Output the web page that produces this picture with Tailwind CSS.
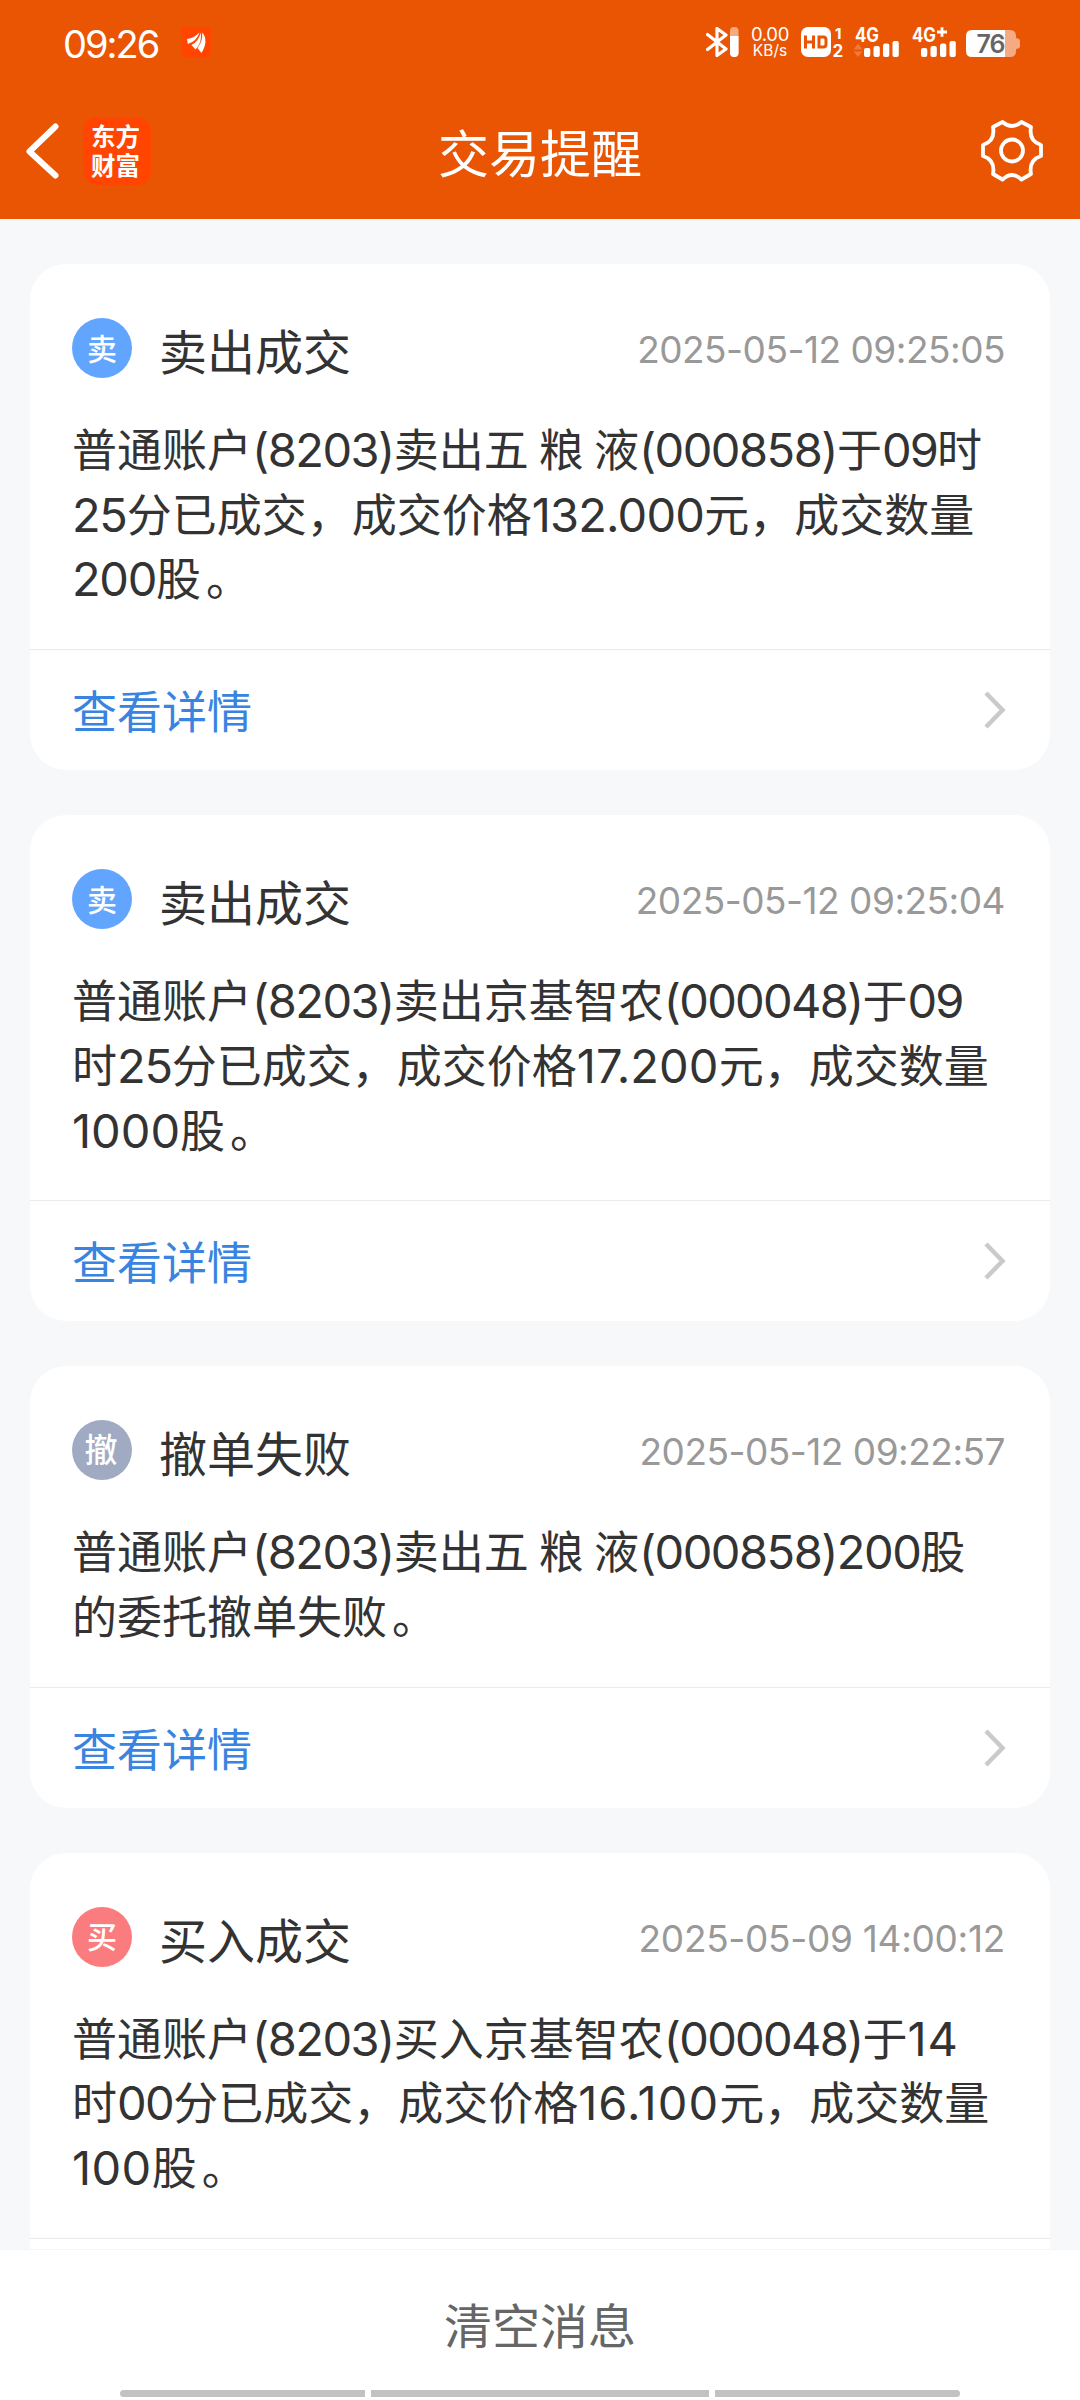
<!DOCTYPE html>
<html lang="zh-CN">
<head>
<meta charset="utf-8">
<title>交易提醒</title>
<script src="https://cdn.jsdelivr.net/npm/@tailwindcss/browser@4"></script>
</head>
<body class="bg-[#f7f8fa]">
<div class="flex h-[2400px] w-[1080px] flex-col overflow-hidden font-['Noto_Sans_CJK_SC',sans-serif] text-[#333333]">

  <header class="flex h-[219px] shrink-0 flex-col bg-[#ea5504] text-white">
    <!-- status bar -->
    <div class="flex h-[84px] items-center pl-[63px] pr-[60px]">
      <span class="w-[118px] pt-1 font-['Inter',sans-serif] text-[38px] leading-none tracking-[-2px]">09:26</span>
      <svg class="h-[30px] w-[30px]" viewBox="0 0 30 30">
        <rect width="30" height="30" rx="3" fill="#ff4500"/>
        <path d="M6 12Q13 11 18.500 5.500Q16 14 6.800 17Z M10.500 18Q18 14 19.700 5.500Q21.500 15 14.500 22.500Z M16.500 21Q22 14 21.200 5.500Q28 13.500 20.500 26Z" fill="#fff"/>
      </svg>
      <svg class="ml-auto h-[30px] w-[34px]" viewBox="0 0 34 30" fill="none">
        <path d="M1.500 7.500L20 22L11 28.500V1.500L20 8L1.500 22.500" stroke="#fff" stroke-width="3.200" stroke-linejoin="round" stroke-linecap="round"/>
        <rect x="24" width="8.500" height="30" rx="4" fill="#f5aa84"/>
        <path d="M24 9h8.500v17a4 4 0 0 1-8.500 0z" fill="#fff"/>
      </svg>
      <div class="ml-[10px] flex w-[40px] flex-col items-center font-['Inter',sans-serif] leading-none">
        <span class="text-[18.5px] leading-[17px] tracking-[-0.3px]">0.00</span>
        <span class="text-[15.5px] leading-[15px]">KB/s</span>
      </div>
      <svg class="ml-[11px] h-[30px] w-[43px] overflow-visible font-['Inter',sans-serif]" viewBox="0 0 43 30">
        <rect width="30" height="30" rx="7" fill="#fff"/>
        <path d="M4.500 8.500V21.500M12.500 8.500V21.500M4.500 15H12.500M18 10H22.500Q25 10 25 13V17Q25 20 22.500 20H18Z" stroke="#ea5504" stroke-width="3" fill="none"/>
        <text x="34" y="11.500" font-size="15" font-weight="700" fill="#fff">1</text>
        <text x="31.500" y="29.500" font-size="17" font-weight="700" fill="#fff">2</text>
      </svg>
      <svg class="ml-[9px] h-[32px] w-[48px] overflow-visible font-['Inter',sans-serif]" viewBox="0 0 48 32">
        <text x="2" y="16" font-size="19.500" font-weight="700" fill="#fff" textLength="24" lengthAdjust="spacingAndGlyphs">4G</text>
        <path d="M0.500 23.500L5 17.500L9.500 23.500ZM0.500 25.500L5 31L9.500 25.500Z" fill="#f2793a"/>
        <g fill="#fff"><rect x="11" y="22" width="6.300" height="9" rx="2"/><rect x="20.500" y="20" width="6.300" height="11" rx="2"/><rect x="30" y="17.500" width="6.300" height="13.500" rx="2"/><rect x="39.500" y="15" width="6.300" height="16" rx="2"/></g>
      </svg>
      <svg class="ml-[10px] h-[32px] w-[46px] overflow-visible font-['Inter',sans-serif]" viewBox="0 0 46 32">
        <text x="1" y="16" font-size="19.500" font-weight="700" fill="#fff" textLength="24" lengthAdjust="spacingAndGlyphs">4G</text>
        <path d="M26 6H36M31 1.200V10.800" stroke="#fff" stroke-width="2.800"/>
        <g fill="#fff"><rect x="10" y="22" width="6.300" height="9" rx="2"/><rect x="19.500" y="20" width="6.300" height="11" rx="2"/><rect x="29" y="17.500" width="6.300" height="13.500" rx="2"/><rect x="38.500" y="15" width="6.300" height="16" rx="2"/></g>
      </svg>
      <svg class="ml-[9px] mt-[3px] h-[27px] w-[54px] overflow-visible font-['Inter',sans-serif]" viewBox="0 0 54 27">
        <path d="M39 0H44Q50 0 50 6V8Q54 8.500 54 11V16Q54 18.500 50 19V21Q50 27 44 27H39Z" fill="#f5aa84"/>
        <path d="M39 0H6Q0 0 0 6V21Q0 27 6 27H39Z" fill="#fff"/>
        <text x="10.500" y="22.700" font-size="25" font-weight="600" fill="#666" textLength="29" lengthAdjust="spacing">76</text>
      </svg>
    </div>
    <!-- title bar -->
    <div class="grid h-[135px] grid-cols-[1fr_auto_1fr] items-center pb-px">
      <div class="flex items-center pl-[25px]">
        <svg class="h-[56px] w-[34px]" viewBox="0 0 34 56" fill="none"><path d="M30.500 3.500L4.500 28.500L30.500 52.500" stroke="#fff" stroke-width="6" stroke-linecap="round" stroke-linejoin="round"/></svg>
        <div class="ml-[24px] flex h-[68px] w-[68px] flex-col items-center justify-center rounded-[14px] bg-[#ff4500] pb-[3px] pr-[3px] text-[24.5px] font-bold leading-[29px]"><span>东方</span><span>财富</span></div>
      </div>
      <h1 class="text-[51px] font-normal leading-[60px]">交易提醒</h1>
      <svg class="mr-[36px] h-[64px] w-[64px] justify-self-end" viewBox="0 0 64 64" fill="none" stroke="#fff" stroke-width="3.800" stroke-linejoin="round">
        <path d="M22.500 3Q32 11 41.500 3L51 8Q48.500 22 61 26V37Q48.500 41 51 55L41.500 60.500Q32 51.500 22.500 60.500L13 55Q15.500 41 3 37V26Q15.500 22 13 8Z"/>
        <circle cx="32" cy="31.500" r="11"/>
      </svg>
    </div>
  </header>

  <main class="flex min-h-0 flex-1 flex-col gap-[45px] overflow-hidden px-[30px] pt-[45px]">

    <article class="shrink-0 rounded-[36px] bg-white">
      <div class="px-[42px] pb-[39px] pt-[54px]">
        <div class="flex h-[60px] items-center">
          <span class="flex h-[60px] w-[60px] items-center justify-center rounded-full bg-[#62a5ff] pb-[3px] text-[30px] font-medium leading-none text-white">卖</span>
          <h2 class="ml-[27px] pt-[2px] text-[48px] font-normal leading-[56px]">卖出成交</h2>
          <time class="ml-auto mr-[3px] pt-1 font-['Inter',sans-serif] text-[37px] leading-[56px] tracking-[-0.5px] text-[#999999]">2025-05-12 09:25:05</time>
        </div>
        <p class="mt-[38px] whitespace-nowrap text-[45px] leading-[64.7px]">普通账户<span class="font-['Inter',sans-serif] text-[47px] leading-none tracking-[-1.5px]">(8203)</span>卖出五 粮 液<span class="font-['Inter',sans-serif] text-[47px] leading-none tracking-[-1.5px]">(000858)</span>于<span class="font-['Inter',sans-serif] text-[47px] leading-none tracking-[-1.9px]">09</span>时<br><span class="font-['Inter',sans-serif] text-[47px] leading-none tracking-[-1.3px]">25</span>分已成交，成交价格<span class="font-['Inter',sans-serif] text-[47px] leading-none tracking-[-0.8px]">132.000</span>元，成交数量<br><span class="font-['Inter',sans-serif] text-[47px] leading-none tracking-[-1.3px]">200</span>股<span class="pl-[5px]">。</span></p>
      </div>
      <a class="flex h-[121px] items-center justify-between border-t border-[#ebebeb] pl-[42px] pr-[44px] text-[45px] text-[#3884e0]">查看详情<svg class="h-[38px] w-[22px]" viewBox="0 0 22 38" fill="none"><path d="M2 2L18.500 19L2 36" stroke="#cacaca" stroke-width="4.500"/></svg></a>
    </article>

    <article class="shrink-0 rounded-[36px] bg-white">
      <div class="px-[42px] pb-[39px] pt-[54px]">
        <div class="flex h-[60px] items-center">
          <span class="flex h-[60px] w-[60px] items-center justify-center rounded-full bg-[#62a5ff] pb-[3px] text-[30px] font-medium leading-none text-white">卖</span>
          <h2 class="ml-[27px] pt-[2px] text-[48px] font-normal leading-[56px]">卖出成交</h2>
          <time class="ml-auto mr-[3px] pt-1 font-['Inter',sans-serif] text-[37px] leading-[56px] tracking-[-0.5px] text-[#999999]">2025-05-12 09:25:04</time>
        </div>
        <p class="mt-[38px] whitespace-nowrap text-[45px] leading-[64.7px]">普通账户<span class="font-['Inter',sans-serif] text-[47px] leading-none tracking-[-1.5px]">(8203)</span>卖出京基智农<span class="font-['Inter',sans-serif] text-[47px] leading-none tracking-[-1.7px]">(000048)</span>于<span class="font-['Inter',sans-serif] text-[47px] leading-none tracking-[-1.9px]">09</span><br>时<span class="font-['Inter',sans-serif] text-[47px] leading-none tracking-[-1.3px]">25</span>分已成交，成交价格<span class="font-['Inter',sans-serif] text-[47px] leading-none tracking-[0.1px]">17.200</span>元，成交数量<br><span class="font-['Inter',sans-serif] text-[47px] leading-none">1000</span>股<span class="pl-[5px]">。</span></p>
      </div>
      <a class="flex h-[121px] items-center justify-between border-t border-[#ebebeb] pl-[42px] pr-[44px] text-[45px] text-[#3884e0]">查看详情<svg class="h-[38px] w-[22px]" viewBox="0 0 22 38" fill="none"><path d="M2 2L18.500 19L2 36" stroke="#cacaca" stroke-width="4.500"/></svg></a>
    </article>

    <article class="shrink-0 rounded-[36px] bg-white">
      <div class="px-[42px] pb-[39px] pt-[54px]">
        <div class="flex h-[60px] items-center">
          <span class="flex h-[60px] w-[60px] items-center justify-center rounded-full bg-[#a0abc3] pb-[3px] pr-[2px] text-[33px] font-medium leading-none text-white">撤</span>
          <h2 class="ml-[27px] pt-[2px] text-[48px] font-normal leading-[56px]">撤单失败</h2>
          <time class="ml-auto mr-[3px] pt-1 font-['Inter',sans-serif] text-[37px] leading-[56px] tracking-[-0.5px] text-[#999999]">2025-05-12 09:22:57</time>
        </div>
        <p class="mt-[38px] whitespace-nowrap text-[45px] leading-[64.7px]">普通账户<span class="font-['Inter',sans-serif] text-[47px] leading-none tracking-[-1.5px]">(8203)</span>卖出五 粮 液<span class="font-['Inter',sans-serif] text-[47px] leading-none tracking-[-1.5px]">(000858)200</span>股<br>的委托撤单失败<span class="pl-[5px]">。</span></p>
      </div>
      <a class="flex h-[121px] items-center justify-between border-t border-[#ebebeb] pl-[42px] pr-[44px] text-[45px] text-[#3884e0]">查看详情<svg class="h-[38px] w-[22px]" viewBox="0 0 22 38" fill="none"><path d="M2 2L18.500 19L2 36" stroke="#cacaca" stroke-width="4.500"/></svg></a>
    </article>

    <article class="shrink-0 rounded-[36px] bg-white">
      <div class="px-[42px] pb-[39px] pt-[54px]">
        <div class="flex h-[60px] items-center">
          <span class="flex h-[60px] w-[60px] items-center justify-center rounded-full bg-[#fb7c7e] pb-[3px] text-[30px] font-medium leading-none text-white">买</span>
          <h2 class="ml-[27px] pt-[2px] text-[48px] font-normal leading-[56px]">买入成交</h2>
          <time class="ml-auto mr-[3px] pt-1 font-['Inter',sans-serif] text-[37px] leading-[56px] tracking-[-0.3px] text-[#999999]">2025-05-09 14:00:12</time>
        </div>
        <p class="mt-[38px] whitespace-nowrap text-[45px] leading-[64.7px]">普通账户<span class="font-['Inter',sans-serif] text-[47px] leading-none tracking-[-1.5px]">(8203)</span>买入京基智农<span class="font-['Inter',sans-serif] text-[47px] leading-none tracking-[-1.7px]">(000048)</span>于<span class="font-['Inter',sans-serif] text-[47px] leading-none tracking-[0.8px]">14</span><br>时<span class="font-['Inter',sans-serif] text-[47px] leading-none tracking-[-1.6px]">00</span>分已成交，成交价格<span class="font-['Inter',sans-serif] text-[47px] leading-none tracking-[1.07px]">16.100</span>元，成交数量<br><span class="font-['Inter',sans-serif] text-[47px] leading-none tracking-[0.4px]">100</span>股<span class="pl-[5px]">。</span></p>
      </div>
      <div class="h-[121px] border-t border-[#ebebeb]"></div>
    </article>
  </main>

  <footer class="flex h-[151px] shrink-0 flex-col items-center border-t border-[#f5f5f6] bg-white">
    <button class="h-[140px] pt-[5px] text-[48px] text-[#666666]">清空消息</button>
    <div class="flex h-[7px] w-[840px] gap-[6px]">
      <span class="w-[245px] rounded-l-full bg-[#c2c2c2]"></span>
      <span class="flex-1 bg-[#c2c2c2]"></span>
      <span class="w-[245px] rounded-r-full bg-[#c2c2c2]"></span>
    </div>
  </footer>
</div>
</body>
</html>
